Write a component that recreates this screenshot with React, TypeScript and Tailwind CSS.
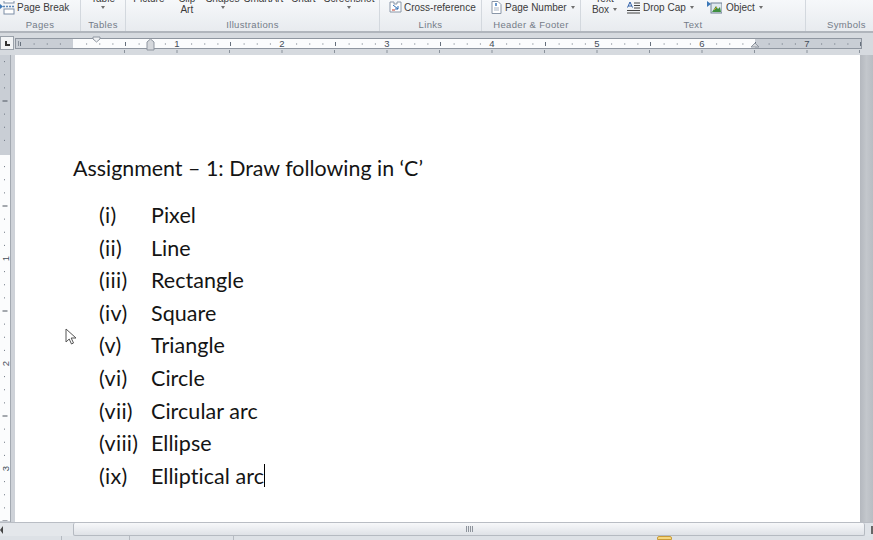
import React from 'react';

const items = [
  ['(i)', 'Pixel'],
  ['(ii)', 'Line'],
  ['(iii)', 'Rectangle'],
  ['(iv)', 'Square'],
  ['(v)', 'Triangle'],
  ['(vi)', 'Circle'],
  ['(vii)', 'Circular arc'],
  ['(viii)', 'Ellipse'],
  ['(ix)', 'Elliptical arc'],
];

const Arrow = () => (
  <span className="inline-block ml-[4px] mb-[2px] w-0 h-0 border-x-[2.500px] border-x-transparent border-t-[3px] border-t-[#707070]" />
);

const PageBreakIcon = () => (
  <svg width="15" height="14" viewBox="0 0 15 14" className="shrink-0">
    <rect x="4" y="-4" width="10" height="6" fill="#fff" stroke="#7d8ea6" />
    <path d="M3 5.500h12" stroke="#5a86b8" strokeWidth="1.500" strokeDasharray="2 1" />
    <rect x="4" y="8" width="10" height="5" fill="#fff" stroke="#7d8ea6" />
    <path d="M0 3l3 2.500L0 8z" fill="#3c78b8" />
  </svg>
);

const CrossRefIcon = () => (
  <svg width="13" height="13" viewBox="0 0 13 13" className="shrink-0">
    <path d="M1 1h4v2h3V1h4v10H1z" fill="#fff" stroke="#8a97a8" />
    <path d="M4 4l5 4M9 8V5M9 8H6" stroke="#2d6db5" fill="none" />
    <path d="M3 9h3" stroke="#c0392b" />
  </svg>
);

const PageNumberIcon = () => (
  <svg width="11" height="13" viewBox="0 0 11 13" className="shrink-0">
    <path d="M1 .5h6l3 3v9H1z" fill="#fff" stroke="#8a97a8" />
    <path d="M3 7h5M3 9h5" stroke="#a9b5c4" />
    <path d="M5 2v3" stroke="#2d6db5" strokeWidth="1.400" />
  </svg>
);

const DropCapIcon = () => (
  <svg width="14" height="13" viewBox="0 0 14 13" className="shrink-0">
    <path d="M1.500 6.500L4 1l2.500 5.500M2.300 5h3.400" stroke="#2f5fa8" fill="none" />
    <path d="M8 2h6M8 4.500h6M8 7h6M1 9.500h13M1 12h13" stroke="#444" />
  </svg>
);

const ObjectIcon = () => (
  <svg width="15" height="13" viewBox="0 0 15 13" className="shrink-0">
    <rect x="4" y="2" width="11" height="10" fill="#dfe8ee" stroke="#6f8094" />
    <path d="M0 0l4 3-4 3z" fill="#3c78b8" />
    <path d="M5 11l4-6 2 3 2-2 1 5z" fill="#3f8f3f" />
    <path d="M7 9l3-3" stroke="#c9a227" />
  </svg>
);

const Group = ({
  width,
  label,
  children,
  last,
}: {
  width: string;
  label: string;
  children?: React.ReactNode;
  last?: boolean;
}) => (
  <div className={`${width} h-full shrink-0 flex flex-col ${last ? 'pl-[14px]' : 'border-r border-[#d3d8de]'}`}>
    <div className="flex-1 min-h-0 overflow-hidden text-[10px] leading-[13px] text-[#3b3b3b]">{children}</div>
    <div className="h-[12px] text-center text-[9.500px] leading-[12px] tracking-[0.350px] text-[#747c88]">{label}</div>
  </div>
);

const HorizontalRuler = () => {
  const ticks = [];
  for (let i = -4; i <= 61; i++) {
    const x = 58 + i * 13.125;
    if (i % 8 === 0) continue;
    if (i % 4 === 0) ticks.push(<path key={i} d={`M${x} 4v4`} stroke="#66707c" />);
    else ticks.push(<rect key={i} x={x} y="5.500" width="1" height="1" fill="#66707c" />);
  }
  const bottom = [];
  for (let i = 0; i <= 14; i++) {
    bottom.push(<rect key={i} x={109 + i * 52.5} y="12" width="1" height="3" fill="#8a929c" />);
  }
  return (
    <svg width="847" height="17" viewBox="0 0 847 17" className="block overflow-visible">
      <rect x="0.500" y="0.500" width="846" height="10" fill="#c9ced5" stroke="#8f96a0" />
      <rect x="58" y="1" width="682" height="9" fill="#fbfcfd" />
      {ticks}
      {bottom}
      {[1, 2, 3, 4, 5, 6, 7].map((n) => (
        <text key={n} x={58 + n * 105 - 1} y="9" textAnchor="middle" fontSize="9.500" fontFamily="'Liberation Sans', sans-serif" fill="#444c58">
          {n}
        </text>
      ))}
      <rect x="3" y="3" width="1" height="5" fill="#8a929c" />
      <path d="M78 -1h7v2l-3.500 3-3.500-3z" fill="#eef0f3" stroke="#8f96a0" />
      <path d="M132 4l3.500-3 3.500 3v8h-7z" fill="#d5d8dc" stroke="#8f96a0" />
      <path d="M736 9l4-4 4 4z" fill="#d5d8dc" stroke="#8f96a0" />
    </svg>
  );
};

const VerticalRuler = () => {
  const ticks = [];
  for (let n = -7; n <= 28; n++) {
    if (n % 8 === 0) continue;
    const y = 98.5 + n * 13.125;
    if (n % 8 === 4 || n % 8 === -4) ticks.push(<rect key={n} x="2.500" y={y - 0.5} width="5" height="1" fill="#4e5560" />);
    else ticks.push(<rect key={n} x="4" y={y - 0.5} width="1" height="1" fill="#6d7682" />);
  }
  return (
    <svg width="10" height="466" viewBox="0 0 10 466" className="block">
      <rect width="10" height="100" fill="#c9ced5" />
      <rect y="100" width="10" height="366" fill="#fbfcfd" />
      {ticks}
      {[1, 2, 3].map((n) => (
        <text key={n} transform={`translate(8.500 ${98.5 + n * 105}) rotate(-90)`} textAnchor="middle" fontSize="9.500" fontFamily="'Liberation Sans', sans-serif" fill="#444c58">
          {n}
        </text>
      ))}
    </svg>
  );
};

const Cursor = () => (
  <svg width="13" height="18" viewBox="0 0 13 18" className="absolute left-[65px] top-[273px]">
    <path d="M1 1v13l3.200-3 2.300 5 2-1-2.300-5H11z" fill="#fff" stroke="#555" />
  </svg>
);

export default function App() {
  return (
    <div className="w-[873px] h-[540px] overflow-hidden flex flex-col bg-[#ccd1d8] font-['Liberation_Sans',sans-serif]">
      {/* ribbon */}
      <div className="h-[33px] shrink-0 flex bg-gradient-to-b from-[#f6f8fa] to-[#e8ebef] border-b-2 border-[#b0b5bc]">
        <Group width="w-[81px]" label="Pages">
          <div className="flex items-center gap-[2px] h-[13px] mt-[1px] whitespace-nowrap">
            <PageBreakIcon />
            <span>Page Break</span>
          </div>
        </Group>
        <Group width="w-[45px]" label="Tables">
          <div className="-mt-[7px] text-center leading-[11px]">
            <div>Table</div>
            <div className="leading-[8px] -ml-[4px]"><Arrow /></div>
          </div>
        </Group>
        <Group width="w-[254px]" label="Illustrations">
          <div className="flex -mt-[7px] pl-[4px] whitespace-nowrap leading-[11px]">
            <div className="w-[38px] text-center">Picture</div>
            <div className="w-[38px] text-center">Clip<br />Art</div>
            <div className="w-[34px] text-center">Shapes<div className="leading-[8px] -ml-[4px]"><Arrow /></div></div>
            <div className="w-[48px] text-center">SmartArt</div>
            <div className="w-[32px] text-center">Chart</div>
            <div className="w-[60px] text-center">Screenshot<div className="leading-[8px] -ml-[4px]"><Arrow /></div></div>
          </div>
        </Group>
        <Group width="w-[102px]" label="Links">
          <div className="flex items-center gap-[2px] h-[13px] mt-[1px] pl-[9px] whitespace-nowrap">
            <CrossRefIcon />
            <span>Cross-reference</span>
          </div>
        </Group>
        <Group width="w-[99px]" label="Header & Footer">
          <div className="flex items-center gap-[3px] h-[13px] mt-[1px] pl-[9px] whitespace-nowrap">
            <PageNumberIcon />
            <span>Page Number<Arrow /></span>
          </div>
        </Group>
        <Group width="w-[225px]" label="Text">
          <div className="flex whitespace-nowrap -mt-[7px] leading-[11px]">
            <div className="w-[45px] text-center pl-[2px]">Text<br />Box<Arrow /></div>
            <div className="flex items-center gap-[3px] h-[13px] mt-[8px] w-[81px]">
              <DropCapIcon />
              <span>Drop Cap<Arrow /></span>
            </div>
            <div className="flex items-center gap-[4px] h-[13px] mt-[8px]">
              <ObjectIcon />
              <span>Object<Arrow /></span>
            </div>
          </div>
        </Group>
        <Group width="flex-1" label="Symbols" last />
      </div>

      {/* ruler row */}
      <div className="h-[22px] shrink-0 flex bg-[#d6dadf]">
        <div className="w-[15px] shrink-0 pt-[3px]">
          <div className="w-[14px] h-[14px] bg-[#f2f4f6] border border-[#9aa1aa] flex items-end justify-center pb-[3px]">
            <div className="w-[5px] h-[5px] border-l-2 border-b-2 border-[#333]" />
          </div>
        </div>
        <div className="pt-[5px]">
          <HorizontalRuler />
        </div>
      </div>

      {/* document area */}
      <div className="relative h-[467px] shrink-0 flex">
        <div className="w-[10px] shrink-0 bg-[#c9ced5]">
          <VerticalRuler />
        </div>
        <div className="w-[5px] shrink-0 bg-[#ced2d8] border-l border-[#a3a9b1]" />
        <div className="flex-1 bg-white pl-[58px] pt-[99px] font-['Lato',sans-serif] text-[21.400px] leading-[28px] text-[#141414]">
          <div className="h-[28px] whitespace-nowrap">Assignment – 1: Draw following in ‘C’</div>
          <div className="mt-[19px] pl-[26px] flex flex-col gap-[4.600px] text-[21.500px]">
            {items.map(([marker, text], i) => (
              <div key={marker} className="flex h-[28px] whitespace-nowrap">
                <span className="w-[52px] shrink-0 tracking-[0.300px]">{marker}</span>
                <span className="flex items-center tracking-[0.050px]">
                  {text}
                  {i === items.length - 1 && <span className="w-[1px] h-[23px] bg-black" />}
                </span>
              </div>
            ))}
          </div>
        </div>
        <div className="w-[13px] shrink-0 bg-gradient-to-r from-[#b4b8be] via-[#c3c7cc] to-[#b9bdc3]" />
        <Cursor />
      </div>

      {/* horizontal scrollbar */}
      <div className="h-[14px] shrink-0 flex bg-[#dfe3e8] border-t border-[#b9bdc4]">
        <div className="w-[73px] shrink-0 bg-[#e4e7eb] flex items-center">
          <div className="w-0 h-0 border-y-[4px] border-y-transparent border-r-[3px] border-r-[#444]" />
        </div>
        <div className="w-[792px] shrink-0 rounded-[2px] bg-gradient-to-b from-[#f7f8fa] to-[#dfe2e7] border-x border-b border-[#b5bac1] flex items-center justify-center">
          <div className="w-[7px] h-[6px] ml-[1px] bg-[repeating-linear-gradient(90deg,#8e949c_0,#8e949c_1px,#e8eaee_1px,#e8eaee_2px)]" />
        </div>
        <div className="flex-1 flex items-center justify-end">
          <div className="w-[2px] h-[8px] bg-[#666]" />
        </div>
      </div>

      {/* status bar */}
      <div className="flex-1 flex bg-[#dde1e6]">
        <div className="w-[62px] border-r border-[#b5bac1]" />
        <div className="w-[68px] border-r border-[#b5bac1]" />
        <div className="w-[104px] border-r border-[#b5bac1]" />
        <div className="w-[423px]" />
        <div className="w-[15px] rounded-t-[2px] bg-[#f6d77f] border border-[#c99c3a]" />
      </div>
    </div>
  );
}
